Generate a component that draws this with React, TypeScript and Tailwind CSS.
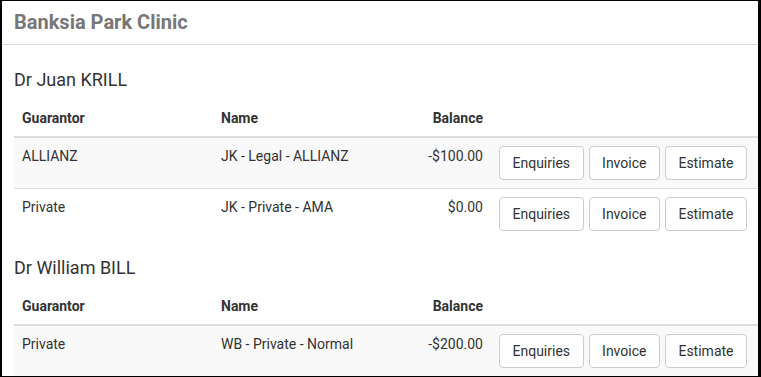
const doctors = [
  {
    name: 'Dr Juan KRILL',
    rows: [
      { guarantor: 'ALLIANZ', name: 'JK - Legal - ALLIANZ', balance: '-$100.00' },
      { guarantor: 'Private', name: 'JK - Private - AMA', balance: '$0.00' },
    ],
  },
  {
    name: 'Dr William BILL',
    rows: [{ guarantor: 'Private', name: 'WB - Private - Normal', balance: '-$200.00' }],
  },
];

function ActionButton({ label }: { label: string }) {
  return (
    <button className="h-[34px] rounded-[4px] border border-[#ccc] bg-white px-[12.5px] text-[14px] leading-5 text-[#333]">
      {label}
    </button>
  );
}

export default function App() {
  return (
    <div
      className="h-[377px] w-[761px] overflow-hidden border-y border-l-2 border-r-[3px] border-black bg-white text-[14px] leading-5 text-[#333]"
      style={{ fontFamily: 'Roboto, "Liberation Sans", sans-serif' }}
    >
      {/* panel heading */}
      <div className="h-[44px] border-b border-[#ddd] pl-3 pt-[9px]">
        <h3 className="text-[20px] font-bold leading-6 text-[#777]">Banksia Park Clinic</h3>
      </div>

      <div className="pl-3 pt-[25px]">
        {doctors.map((doc, i) => (
          <div key={doc.name} className={i > 0 ? 'mt-[19px]' : ''}>
            <h4 className="h-5 text-[18px] leading-5 text-[#333]">{doc.name}</h4>
            <table className="mt-[10px] w-full border-collapse">
              <thead>
                <tr className="border-b-2 border-[#ddd]">
                  <th className="w-[199px] p-2 text-left font-bold">Guarantor</th>
                  <th className="w-[170px] p-2 text-left font-bold">Name</th>
                  <th className="w-[108px] p-2 text-right font-bold">Balance</th>
                  <th className="p-2" />
                </tr>
              </thead>
              <tbody>
                {doc.rows.map((r, j) => (
                  <tr key={j} className={`border-b border-[#ddd] last:border-b-0 ${j % 2 === 0 ? 'bg-[#f9f9f9]' : 'bg-white'}`}>
                    <td className="p-2 align-top">{r.guarantor}</td>
                    <td className="p-2 align-top">{r.name}</td>
                    <td className="p-2 text-right align-top">{r.balance}</td>
                    <td className="p-2 align-top">
                      <div className="flex gap-[5px]">
                        <ActionButton label="Enquiries" />
                        <ActionButton label="Invoice" />
                        <ActionButton label="Estimate" />
                      </div>
                    </td>
                  </tr>
                ))}
              </tbody>
            </table>
          </div>
        ))}
      </div>
    </div>
  );
}
